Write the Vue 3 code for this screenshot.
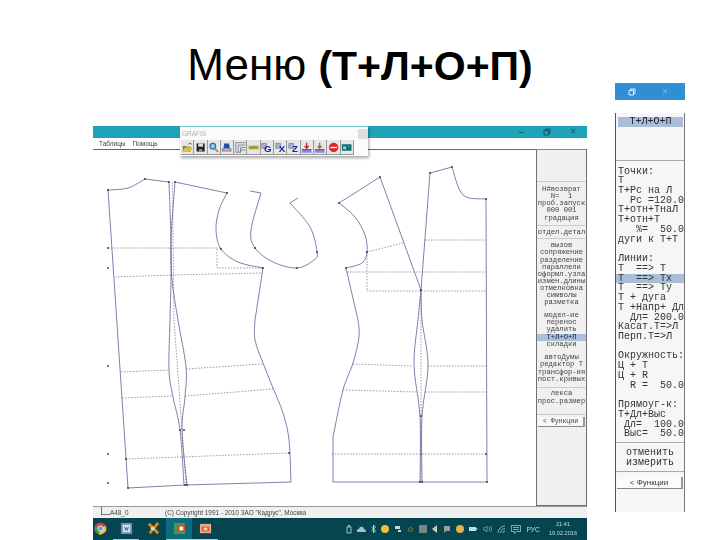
<template>
  <div class="slide">
    <h1 class="title">Меню <b>(Т+Л+О+П)</b></h1>

    <section class="window">
      <header class="titlebar">
        <span class="ctl">–</span>
        <svg class="restore" width="8" height="8" viewBox="0 0 8 8"><path d="M1 2.500h4.500V7H1zM2.500 2.500V1H7v4.500H5.500" fill="none" stroke="#0b5666" /></svg>
        <span class="ctl">×</span>
      </header>

      <nav class="menu">
        <span>Таблицы</span>
        <span>Помощь</span>
      </nav>

      <div class="toolbar">
        <div class="toolbar-head">
          <span>GRAFIS</span>
          <i class="toolbar-close"></i>
        </div>
        <div class="tools">
          <div class="tool">
            <svg viewBox="0 0 14 14"><path d="M1 5h4l1 1h5v6H1z" fill="#8a7a2a" /><path d="M3 7h10l-2 5H1z" fill="#d8c23e" /><path d="M8 3c2-2 3-1 4 0" fill="none" stroke="#333" /></svg>
          </div>
          <div class="tool">
            <svg viewBox="0 0 14 14"><path d="M2 2h10v10H2z" fill="#222" /><path d="M4 2h6v4H4z" fill="#ddd" /><path d="M5 9h4v3H5z" fill="#999" /></svg>
          </div>
          <div class="tool">
            <svg viewBox="0 0 14 14"><circle cx="6" cy="5.500" r="3.500" fill="#8cc8ee" stroke="#2a6ea8" stroke-width="1.500" /><path d="M8.500 8.500l4 4" stroke="#b48a2a" stroke-width="2.200" /></svg>
          </div>
          <div class="tool">
            <svg viewBox="0 0 14 14"><path d="M1 8h12v4H1z" fill="#889" /><path d="M4 2l6 0 1 6H3z" fill="#1f4fa8" /><path d="M3 10h8" stroke="#ddd" /></svg>
          </div>
          <div class="tool">
            <svg viewBox="0 0 14 14"><path d="M1 13V1h12M1 13h3V4h9M4 13h3V7h6M7 13V10h6" fill="none" stroke="#778" /></svg>
          </div>
          <div class="tool">
            <svg viewBox="0 0 14 14"><path d="M1 5h12v4H1z" fill="#d8d040" stroke="#887" stroke-width=".5" /><path d="M3 6v2M5 6v2M7 6v2M9 6v2M11 6v2" stroke="#333" /></svg>
          </div>
          <div class="tool" v-for="letter in ['G', 'X', 'Z']" :key="letter">
            <svg viewBox="0 0 14 14">
              <path d="M1 2h6v6H1z" fill="#a9b6c6" stroke="#556" stroke-width=".6" />
              <text x="8.500" y="13" text-anchor="middle" class="tool-letter">{{ letter }}</text>
            </svg>
          </div>
          <div class="tool" v-for="n in 2" :key="n">
            <svg viewBox="0 0 14 14"><path d="M7 1v6M4.500 5L7 8l2.500-3" fill="none" :stroke="n === 1 ? '#d02020' : '#a86a20'" stroke-width="1.600" /><path d="M1 10h12" stroke="#2020c0" stroke-width="1.500" /><path d="M1 12.500h12" stroke="#2020c0" /></svg>
          </div>
          <div class="tool">
            <svg viewBox="0 0 14 14"><circle cx="7" cy="7" r="5.800" fill="#e02828" /><path d="M3 7h8" stroke="#fff" stroke-width="1.600" /></svg>
          </div>
          <div class="tool">
            <svg viewBox="0 0 14 14"><path d="M1 3h12v8H1z" fill="#0e6d72" /><path d="M3 6h3v3H3zM8 6h3" fill="#9dd" stroke="#9dd" stroke-width=".6" /></svg>
          </div>
        </div>
      </div>

      <div class="work">
        <div class="canvas">
          <svg class="pattern" width="443" height="357" viewBox="93 149 443 357">
            <path v-for="(d, i) in dotted" :key="'d' + i" :d="d" class="dot-line" />
            <path v-for="(d, i) in solid" :key="'s' + i" :d="d" class="solid-line" />
            <circle v-for="(p, i) in nodes" :key="'n' + i" :cx="p[0]" :cy="p[1]" r="0.900" class="node" />
          </svg>
        </div>

        <aside class="side">
          <div v-for="group in sideGroups" :key="group.cls" class="side-group" :class="group.cls">
            <div
              v-for="line in group.lines"
              :key="line"
              class="side-line"
              :class="{ active: line === 'Т+Л+О+П' }"
            >{{ line }}</div>
          </div>
          <div class="side-btn">&lt; Функции</div>
        </aside>
      </div>

      <footer class="status">
        <span class="status-name"><i></i>А48_0</span>
        <span>(C) Copyright 1991 - 2010 ЗАО "Кадрус", Москва</span>
      </footer>

      <div class="taskbar">
        <div class="task first">
          <svg width="13" height="13" viewBox="0 0 14 14"><circle cx="7" cy="7" r="6.500" fill="#d8423a" /><path d="M7 7L1 4v6l4 3.500z" fill="#3e9a4a" /><path d="M7 7l6-3v6l-5 3.500H5z" fill="#e8c53a" /><circle cx="7" cy="7" r="2.800" fill="#5a9ad8" stroke="#eee" /></svg>
        </div>
        <div class="task open second">
          <svg width="13" height="13" viewBox="0 0 14 14"><path d="M1 1h12v12H1z" fill="#6f8fb8" /><path d="M3 3h8v8H3z" fill="#d8e2ee" /><path d="M5 5l1 4 1-3 1 3 1-4" fill="none" stroke="#3a5f9a" /></svg>
        </div>
        <div class="task third">
          <svg width="13" height="13" viewBox="0 0 14 14"><path d="M2 2l10 10M12 1L3 12" stroke="#d88a2a" stroke-width="3" /><circle cx="6" cy="7" r="2" fill="#e8d8b0" /></svg>
        </div>
        <div class="task active">
          <svg width="13" height="13" viewBox="0 0 14 14"><path d="M1 1h12v12H1z" fill="#3c9a58" /><path d="M5 3h8v8H5z" fill="#d84a2a" /><path d="M7 5h4v4H7z" fill="#efe" /></svg>
        </div>
        <div class="task open">
          <svg width="13" height="13" viewBox="0 0 14 14"><path d="M1 2h12v10H1z" fill="#e8a88a" /><path d="M3 5h8v5H3z" fill="#d8522a" /><path d="M5 6h4v3H5z" fill="#f4d8c8" /></svg>
        </div>

        <div class="tray">
          <svg width="6" height="9" viewBox="0 0 6 9"><path d="M1 2h4v6H1zM2 2V.5h2V2" fill="none" stroke="#9fc2c8" /></svg>
          <svg width="9" height="6" viewBox="0 0 9 6"><path d="M1 6a1.500 1.500 0 0 1 1-3 2.500 2.500 0 0 1 5 .5 1.300 1.300 0 0 1 1 2.500z" fill="#a8c0c4" /></svg>
          <svg width="5" height="8" viewBox="0 0 5 8"><path d="M.5 2l4 4L2.500 8V0l2 2-4 4" fill="none" stroke="#d8e8ea" stroke-width=".8" /></svg>
          <i class="tray-round yellow"></i>
          <svg width="8" height="8" viewBox="0 0 8 8"><path d="M1 1h5v3H1zM4 5h3v2H4z" fill="#c8d8da" /></svg>
          <svg width="7" height="7" viewBox="0 0 7 7"><circle cx="3.500" cy="3.500" r="2" fill="none" stroke="#7a6a3a" stroke-width="1.200" /></svg>
          <i class="tray-square"></i>
          <svg width="6" height="8" viewBox="0 0 6 8"><path d="M0 4l5-4v8z" fill="#d8c8b0" /></svg>
          <svg width="8" height="8" viewBox="0 0 8 8"><path d="M1 1h6v5H3L1 8z" fill="#90a0a0" /></svg>
          <i class="tray-round orange"></i>
          <svg width="9" height="6" viewBox="0 0 9 6"><path d="M0 1h7v4H0z" fill="#c0e0e8" /><path d="M7 2l2 1-2 1z" fill="#c0e0e8" /></svg>
          <svg width="9" height="8" viewBox="0 0 9 8"><path d="M0 3h2l2-2v6L2 5H0zM6 2a3 3 0 0 1 0 4M7.500 1a4.500 4.500 0 0 1 0 6" fill="none" stroke="#8fb0b6" stroke-width=".7" /></svg>
          <svg width="9" height="8" viewBox="0 0 9 8"><path d="M1 8a7 7 0 0 1 7-7M3.500 8A4.500 4.500 0 0 1 8 3.500M6 8a2 2 0 0 1 2-2" fill="none" stroke="#a8c6ca" stroke-width=".8" /></svg>
          <svg width="10" height="9" viewBox="0 0 10 9"><path d="M.5.5h9v6h-4L3.500 8.500v-2h-3zM2 2.500h6M2 4.500h6" fill="none" stroke="#b8d2d6" stroke-width=".7" /></svg>
          <span class="lang">РУС</span>
          <div class="clock">
            <span>21:41</span>
            <span>19.02.2016</span>
          </div>
        </div>
      </div>
    </section>

    <section class="tools-panel">
      <div class="panel-caption">
        <svg width="8" height="8" viewBox="0 0 8 8"><path d="M1 2.500h4.500V7H1zM2.500 2.500V1H7v4.500H5.500" fill="none" stroke="#dff0fa" /></svg>
        <span>×</span>
      </div>
      <div class="panel-body">
        <div class="panel-head">Т+Л+О+П</div>
        <div class="panel-list">
          <div
            v-for="(row, i) in panelRows"
            :key="i"
            class="panel-row"
            :class="{ picked: row === 'Т  ==> Тх' }"
          >{{ row }}</div>
        </div>
        <div class="panel-actions">
          <div>отменить</div>
          <div>измерить</div>
        </div>
        <div class="panel-btn">&lt; Функции</div>
      </div>
    </section>
  </div>
</template>

<script setup>
// smooth curve through points (catmull-rom to bezier)
function curve(pts) {
  let d = `M${pts[0][0]} ${pts[0][1]}`
  for (let i = 0; i < pts.length - 1; i++) {
    const p0 = pts[i - 1] || pts[i]
    const p1 = pts[i]
    const p2 = pts[i + 1]
    const p3 = pts[i + 2] || p2
    const c1x = p1[0] + (p2[0] - p0[0]) / 6
    const c1y = p1[1] + (p2[1] - p0[1]) / 6
    const c2x = p2[0] - (p3[0] - p1[0]) / 6
    const c2y = p2[1] - (p3[1] - p1[1]) / 6
    d += `C${c1x} ${c1y} ${c2x} ${c2y} ${p2[0]} ${p2[1]}`
  }
  return d
}

const solid = [
  // back
  curve([[108, 190], [128, 188], [145, 179]]),
  'M145 179L169 182M175 182L227 193M108 190L128 488L185 485L291 482',
  curve([[227, 193], [219, 210], [216, 230], [221, 249], [238, 262], [263, 268]]),
  'M263 268L255 320',
  curve([[255, 320], [255, 340], [263, 363], [273, 388], [283, 413], [289, 440], [291, 482]]),
  curve([[169, 182], [171, 240], [171, 280], [170, 320], [169, 370], [173, 397], [180, 430], [184, 485]]),
  curve([[175, 182], [171, 240], [172, 280], [178, 320], [186, 367], [185, 397], [182, 430], [187, 485]]),
  // sleeve
  'M250 191L261 193',
  curve([[261, 193], [251, 230], [255, 248], [273, 262], [297, 268], [314, 260], [317, 252], [310, 227], [290, 203]]),
  'M290 203L298 198',
  // front
  'M339 203L380 177L421 290M486 199L487 482L333 482L333 437',
  curve([[339, 203], [355, 217], [365, 235], [367, 252], [362, 263], [346, 268]]),
  'M346 268L358 320',
  curve([[358, 320], [359, 337], [353, 363], [343, 390], [333, 437]]),
  curve([[486, 199], [463, 195], [452, 167]]),
  'M452 167L430 173L421 290',
  curve([[421, 290], [418, 320], [414, 365], [420, 417], [420, 482]]),
  curve([[421, 290], [422, 320], [428, 365], [422, 417], [422, 482]]),
]

const dotted = [
  'M108 248H221M115 277L172 275L263 273M217 249V268H263',
  'M121 372L169 370M186 369L263 364M122 398L173 396M185 396L273 389M126 459L289 453',
  'M172.500 182L174 320L186 485',
  'M367 252L403 243M367 252V291H486M347 272H486M425 240H486',
  'M353 364L413 366M428 366H486M343 390L417 392M425 392H486M332 454H486M421 290V482',
]

const nodes = [
  [108, 190], [145, 179], [169, 182], [175, 182], [227, 193], [221, 249], [263, 268],
  [108, 248], [108, 268], [108, 366], [108, 454], [108, 483], [126, 459], [128, 488],
  [180, 430], [184, 430], [185, 485], [187, 485], [289, 453], [255, 248], [297, 268], [317, 252],
  [339, 203], [380, 177], [367, 252], [346, 268], [430, 173], [452, 167], [486, 199],
  [421, 290], [421, 416], [486, 454], [487, 482], [420, 482], [422, 482],
]

const sideGroups = [
  { cls: 'g1', lines: ['Н#возврат', 'N=  1', 'проб.запуск', '000 001', 'градация'] },
  { cls: 'g2', lines: ['отдел.детал'] },
  {
    cls: 'g3',
    lines: ['вызов', 'сопряжение', 'разделение', 'параллели', 'оформл.узла', 'измен.длины', 'отмелковка', 'символы', 'разметка'],
  },
  { cls: 'g4', lines: ['модел-ие', 'перенос', 'удалить', 'Т+Л+О+П', 'складки'] },
  { cls: 'g5', lines: ['автоДумы', 'редактор Т', 'трансфор-ия', 'пост.кривых'] },
  { cls: 'g6', lines: ['лекса', 'прос.размер'] },
]

const panelRows = [
  'Точки:', 'Т', 'Т+Рс на Л', '  Рс =120.0', 'Т+отн+ТнаЛ', 'Т+отн+Т', '   %=  50.0', 'дуги к Т+Т', '',
  'Линии:', 'Т  ==> Т', 'Т  ==> Тх', 'Т  ==> Ту', 'Т + дуга', 'Т +Напр+ Дл', '  Дл= 200.0', 'Касат.Т=>Л', 'Перп.Т=>Л', ' ',
  'Окружность:', 'Ц + Т', 'Ц + R', '  R =  50.0', '  ',
  'Прямоуг-к:', 'Т+Дл+Выс', ' Дл=  100.0', ' Выс=  50.0',
]
</script>

<style scoped>
.slide {
  width: 720px;
  height: 540px;
  background: #fff;
  overflow: hidden;
  display: grid;
  grid-template-columns: 93px 494px 28px 70px 35px;
  grid-template-rows: 83px 43px 1fr;
  font-family: "Liberation Sans", Arial, sans-serif;
}

.title {
  grid-column: 1 / -1;
  grid-row: 1 / 3;
  margin: 0;
  padding-top: 42px;
  text-align: center;
  font-size: 44px;
  line-height: 46px;
  font-weight: 400;
  color: #000;
}
.title b {
  font-size: 41px;
  font-weight: 700;
}

.window {
  grid-column: 2;
  grid-row: 3;
  position: relative;
  display: flex;
  flex-direction: column;
  filter: blur(0.3px);
}

.titlebar {
  height: 12px;
  background: #1fa3bb;
  display: flex;
  align-items: center;
  justify-content: flex-end;
  gap: 19px;
  padding-right: 11px;
  color: #0b5666;
}
.ctl {
  font-size: 10px;
  line-height: 12px;
}

.menu {
  height: 11px;
  display: flex;
  gap: 7px;
  padding-left: 6px;
  font-size: 6.500px;
  line-height: 11px;
  color: #444;
}

.toolbar {
  position: absolute;
  left: 87px;
  top: 0;
  width: 188px;
  height: 30px;
  background: #fafcfc;
  border-top: 1px solid #7cc;
  box-sizing: border-box;
  box-shadow: 1px 2px 3px rgba(0, 0, 0, 0.35);
  z-index: 2;
}
.toolbar-head {
  height: 13px;
  display: flex;
  align-items: center;
  justify-content: space-between;
  font-size: 6.500px;
  color: #aaa;
  padding-left: 2px;
}
.toolbar-close {
  width: 10px;
  height: 10px;
  background: #dedede;
}
.tools {
  display: flex;
  padding-left: 1px;
}
.tool {
  width: 13.300px;
  height: 15px;
  box-sizing: border-box;
  padding: 0.500px;
  background: #e6e6e6;
  border-right: 1px solid #999;
  border-bottom: 1px solid #999;
}
.tool svg {
  display: block;
  width: 100%;
  height: 100%;
}
.tool-letter {
  font-family: "Liberation Sans", sans-serif;
  font-size: 12px;
  font-weight: 700;
  fill: #1a24b8;
}

.work {
  flex: 1;
  display: flex;
  min-height: 0;
}

.canvas {
  width: 443px;
  height: 357px;
  box-sizing: border-box;
  border-top: 1px solid #666;
  overflow: hidden;
}
.pattern {
  display: block;
  margin-top: -1px;
}
.solid-line {
  fill: none;
  stroke: #5f5f98;
  stroke-width: 0.800;
}
.dot-line {
  fill: none;
  stroke: #555;
  stroke-width: 0.600;
  stroke-dasharray: 1.500 1.500;
}
.node {
  fill: #333;
}

.side {
  width: 51px;
  box-sizing: border-box;
  background: #f0f0f0;
  border: 1px solid #707070;
  border-top: 1px solid #888;
  padding-top: 31px;
  font-family: "Liberation Mono", monospace;
  font-size: 7.200px;
  color: #444;
}
.side-group {
  text-align: center;
  white-space: pre;
  overflow: hidden;
}
.side-line {
  height: 7.150px;
  line-height: 7.150px;
}
.side-line.active {
  background: #a9c0dc;
  color: #223;
}
.g1 {
  border-top: 1px solid #ccc;
  padding: 4px 0 3px;
}
.g2 {
  border-top: 1px solid #ccc;
  padding: 3.500px 0 1.500px;
}
.g3 {
  border-top: 1px solid #ccc;
  padding-top: 3.500px;
}
.g4 {
  padding-top: 5.500px;
}
.g5 {
  padding: 6.500px 0 4px;
}
.g6 {
  border-top: 1px solid #ccc;
  border-bottom: 1px solid #ccc;
  padding: 2.500px 0 9px;
}
.side-btn {
  height: 10px;
  box-sizing: border-box;
  margin: 2px 1px 0;
  text-align: center;
  line-height: 9px;
  font-size: 6.500px;
  background: #f8f8f8;
  border-right: 2px solid #999;
  border-bottom: 1px solid #888;
}

.status {
  height: 12px;
  background: #f0f0f0;
  border-top: 1px solid #999;
  box-sizing: border-box;
  display: flex;
  font-size: 6.400px;
  line-height: 11px;
  color: #444;
}
.status-name {
  width: 72px;
  box-sizing: border-box;
  padding-left: 8px;
  display: flex;
}
.status-name i {
  width: 9px;
  height: 8px;
  border-left: 1px solid #777;
  border-bottom: 1px solid #777;
  box-sizing: border-box;
}

.taskbar {
  height: 22px;
  background: #04454f;
  display: flex;
  align-items: stretch;
}
.task {
  width: 26px;
  display: flex;
  align-items: center;
  justify-content: center;
  box-sizing: border-box;
  border-bottom: 1px solid transparent;
}
.task.first {
  width: 14px;
}
.task.second {
  margin-left: 6px;
}
.task.third {
  margin-left: 1px;
}
.task.active {
  background: #0d6b7a;
  border-bottom-color: #9fd4e4;
}
.task.open {
  border-bottom-color: #9fd4e4;
}

.tray {
  flex: 1;
  display: flex;
  align-items: center;
  justify-content: flex-end;
  gap: 5px;
  padding-right: 10px;
}
.tray-round {
  width: 8px;
  height: 8px;
  border-radius: 50%;
}
.yellow {
  background: #e8c23a;
}
.orange {
  background: #e8b04a;
}
.tray-square {
  width: 8px;
  height: 8px;
  background: #7a8484;
}
.lang {
  font-size: 6.800px;
  color: #c8dce0;
}
.clock {
  display: flex;
  flex-direction: column;
  align-items: center;
  font-size: 5.600px;
  line-height: 9px;
  color: #c8dce0;
  margin-left: 4px;
}

.tools-panel {
  grid-column: 4;
  grid-row: 2 / 4;
  font-family: "Liberation Mono", monospace;
  font-size: 10px;
  color: #333;
  filter: blur(0.25px);
}
.panel-caption {
  height: 17px;
  background: #2f8ed4;
  display: flex;
  align-items: center;
  gap: 26px;
  padding-left: 13px;
  color: #7fbde6;
  font-family: "Liberation Sans", sans-serif;
}
.panel-body {
  margin-top: 13px;
  height: 399px;
  box-sizing: border-box;
  padding-top: 4px;
  background: #f6f6f6;
  border-left: 1px solid #555;
  border-right: 1px solid #777;
}
.panel-head {
  margin: 0 1px 0 2px;
  height: 9.500px;
  line-height: 9.500px;
  background: #a9bdd6;
  text-align: center;
  color: #223;
}
.panel-list {
  margin-top: 33px;
  border-top: 1px solid #aaa;
  padding: 6px 0 3px 2px;
}
.panel-row {
  height: 9.740px;
  line-height: 9.740px;
  white-space: pre;
}
.panel-row.picked {
  background: #a9bdd6;
  margin-left: -2px;
  padding-left: 2px;
}
.panel-actions {
  border-top: 1px solid #aaa;
  border-bottom: 1px solid #aaa;
  padding: 5px 0 4px;
  text-align: center;
  line-height: 9.500px;
}
.panel-btn {
  margin: 5px 1px 0;
  height: 12px;
  box-sizing: border-box;
  background: #fbfbfb;
  border-right: 2px solid #999;
  border-bottom: 1px solid #888;
  text-align: center;
  font-family: "Liberation Sans", sans-serif;
  font-size: 8px;
  line-height: 11px;
}
</style>

<style>
html,
body {
  margin: 0;
  background: #fff;
}
</style>
